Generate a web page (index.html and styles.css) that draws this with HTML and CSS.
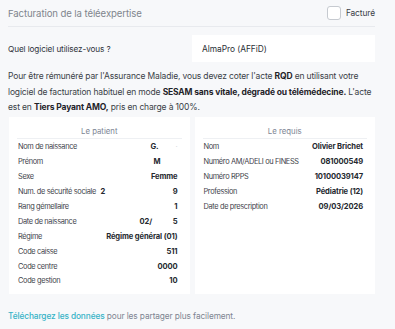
FILE: index.html
```html
<!DOCTYPE html>
<html lang="fr">
<head>
<meta charset="utf-8">
<link rel="stylesheet" href="styles.css">
</head>
<body>
<div class="page">
  <div class="head">
    <span class="title">Facturation de la téléexpertise</span>
    <label class="check"><span class="box"></span>Facturé</label>
  </div>
  <div class="soft">
    <span class="q">Quel logiciel utilisez-vous ?</span>
    <div class="select">AlmaPro (AFFiD)</div>
  </div>
  <p class="info">Pour être rémunéré par l'Assurance Maladie, vous devez coter l'acte <b>RQD</b> en utilisant votre logiciel de facturation habituel en mode <b>SESAM sans vitale, dégradé ou télémédecine.</b> L'acte est en <b>Tiers Payant AMO,</b> pris en charge à 100%.</p>
  <div class="cards">
    <div class="card">
      <div class="card-title">Le patient</div>
      <div class="row"><span class="lbl">Nom de naissance</span><b class="split name"><span>G.</span><span class="faint">·</span></b></div>
      <div class="row"><span class="lbl">Prénom</span><b class="pad2">M</b></div>
      <div class="row"><span class="lbl">Sexe</span><b>Femme</b></div>
      <div class="row"><span class="lbl">Num. de sécurité sociale</span><b class="split nss"><span>2</span><span>9</span></b></div>
      <div class="row"><span class="lbl">Rang gémellaire</span><b>1</b></div>
      <div class="row"><span class="lbl">Date de naissance</span><b class="split dob"><span>02/</span><span>5</span></b></div>
      <div class="row"><span class="lbl">Régime</span><b>Régime général (01)</b></div>
      <div class="row"><span class="lbl">Code caisse</span><b>511</b></div>
      <div class="row"><span class="lbl">Code centre</span><b>0000</b></div>
      <div class="row"><span class="lbl">Code gestion</span><b>10</b></div>
    </div>
    <div class="card">
      <div class="card-title">Le requis</div>
      <div class="row"><span class="lbl">Nom</span><b>Olivier Brichet</b></div>
      <div class="row"><span class="lbl">Numéro AM/ADELI ou FINESS</span><b>081000549</b></div>
      <div class="row"><span class="lbl">Numéro RPPS</span><b>10100039147</b></div>
      <div class="row"><span class="lbl">Profession</span><b>Pédiatrie (12)</b></div>
      <div class="row"><span class="lbl">Date de prescription</span><b>09/03/2026</b></div>
    </div>
  </div>
  <p class="foot"><a href="#">Téléchargez les données</a> pour les partager plus facilement.</p>
</div>
</body>
</html>
```
FILE: styles.css
```css
* { box-sizing: border-box; }
html, body { margin: 0; padding: 0; background: #f7f8fa; }
body { font-family: Inter, "Noto Sans", sans-serif; color: #2b2f36; }
.page { width: 375px; padding: 0 0 0 8px; }
.head {
  height: 27px;
  display: flex; align-items: center; justify-content: space-between;
  border-bottom: 1px solid #e8eaee;
}
.title { font-size: 9.6px; color: #80858d; letter-spacing: -0.1px; }
.check { display: flex; align-items: center; gap: 5px; font-size: 8.4px; color: #3a3f47; letter-spacing: -0.1px; }
.box { width: 14px; height: 14px; border: 1px solid #c6cad0; border-radius: 3px; background: #fff; }
.soft { display: flex; align-items: center; justify-content: space-between; margin-top: 8px; }
.q { font-size: 8.2px; color: #2f333a; letter-spacing: -0.1px; }
.select {
  width: 183px; height: 27px; background: #fff;
  display: flex; align-items: center; padding-left: 10px;
  font-size: 8.4px; color: #2b2f36; letter-spacing: -0.05px;
}
.info { margin: 7px 0 0; font-size: 8.5px; line-height: 15.5px; color: #3a3f47; letter-spacing: -0.15px; padding-right: 2px; }
.info b { color: #1f2329; font-weight: 700; }
.cards { display: flex; gap: 5px; margin-top: 1.5px; padding-left: 1px; }
.card { background: #fff; padding: 7px 8px 0; width: 181px; height: 177px; }
.card-title {
  text-align: center; font-size: 7.8px; color: #7d8594; line-height: 14px;
  height: 15px; border-bottom: 1px solid #eef0f3; margin-bottom: 0.5px;
}
.row {
  display: flex; justify-content: space-between; align-items: center;
  height: 14.9px; font-size: 7.6px; color: #3f444c; letter-spacing: -0.12px;
  padding: 0 4px 0 1px; white-space: nowrap; gap: 4px;
}
.lbl { font-size: 7.4px; letter-spacing: -0.35px; }
.row b { font-weight: 700; color: #25292f; flex-shrink: 0; }
.faint { color: #d5d8dc; font-weight: 400; }
.pad2 { padding-right: 17px; }
.split { display: flex; justify-content: space-between; }
.split.name { width: 27px; }
.split.nss { width: 77px; }
.split.dob { width: 38px; }
.foot { margin: 16px 0 0; font-size: 8.3px; line-height: 12px; color: #7e8591; letter-spacing: -0.1px; }
.foot a { color: #35b3c7; text-decoration: none; font-weight: 500; }
```
